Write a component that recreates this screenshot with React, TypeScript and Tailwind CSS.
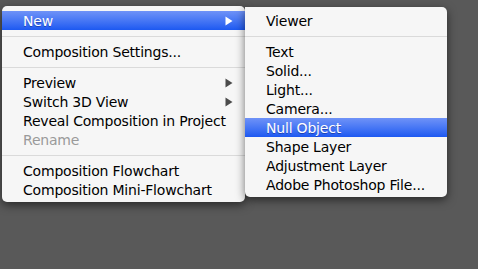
import React from "react";

type Item =
  | { sep: true }
  | { label: string; arrow?: boolean; active?: boolean; disabled?: boolean };

const mainItems: Item[] = [
  { label: "New", arrow: true, active: true },
  { sep: true },
  { label: "Composition Settings..." },
  { sep: true },
  { label: "Preview", arrow: true },
  { label: "Switch 3D View", arrow: true },
  { label: "Reveal Composition in Project" },
  { label: "Rename", disabled: true },
  { sep: true },
  { label: "Composition Flowchart" },
  { label: "Composition Mini-Flowchart" },
];

const subItems: Item[] = [
  { label: "Viewer" },
  { sep: true },
  { label: "Text" },
  { label: "Solid..." },
  { label: "Light..." },
  { label: "Camera..." },
  { label: "Null Object", active: true },
  { label: "Shape Layer" },
  { label: "Adjustment Layer" },
  { label: "Adobe Photoshop File..." },
];

function Arrow({ white }: { white?: boolean }) {
  return (
    <svg width="8" height="10" viewBox="0 0 8 10" className="shrink-0">
      <path d="M0.5 0.5 L7.5 5 L0.5 9.5 Z" fill={white ? "#ffffff" : "#4b4b4b"} />
    </svg>
  );
}

function MenuRows({ items }: { items: Item[] }) {
  return (
    <>
      {items.map((item, idx) => {
        if ("sep" in item) {
          return (
            <div key={idx} className="h-[12px] flex items-center">
              <div className="h-px w-full bg-[#dadada]" />
            </div>
          );
        }
        return (
          <div
            key={idx}
            className={`h-[19px] flex items-center pl-[21px] pr-[12px] text-[14px] leading-none tracking-[-0.2px] ${
              item.active
                ? "bg-gradient-to-b from-[#6f92f7] to-[#1c58f1] text-white [text-shadow:0_1px_0_rgba(0,0,60,0.35)]"
                : item.disabled
                ? "text-[#9a9a9a]"
                : "text-black"
            }`}
          >
            <span className="flex-1 whitespace-nowrap">{item.label}</span>
            {item.arrow && <Arrow white={item.active} />}
          </div>
        );
      })}
    </>
  );
}

export default function App() {
  return (
    <div
      className="w-[478px] h-[269px] bg-[#595959] overflow-hidden flex items-start pl-[2px] pt-[6px]"
      style={{ fontFamily: '"DejaVu Sans", "Liberation Sans", sans-serif' }}
    >
      <div className="w-[243px] bg-[#f6f6f6] rounded-[5px] pt-[5px] pb-[3px] shadow-[0_3px_10px_rgba(0,0,0,0.55)] overflow-hidden">
        <MenuRows items={mainItems} />
      </div>
      <div className="mt-[1px] w-[202px] bg-[#f6f6f6] rounded-[5px] rounded-tl-none pt-[4px] pb-[3px] shadow-[0_3px_10px_rgba(0,0,0,0.55)] overflow-hidden">
        <MenuRows items={subItems} />
      </div>
    </div>
  );
}
